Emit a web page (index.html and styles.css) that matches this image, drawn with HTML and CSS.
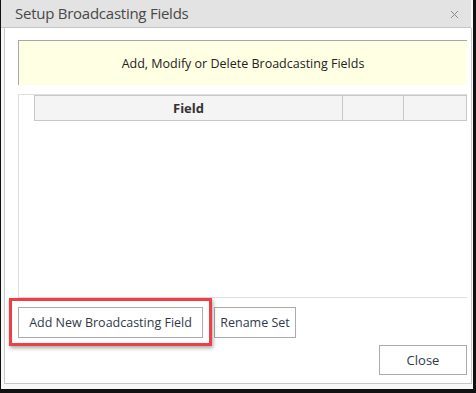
FILE: index.html
```html
<!DOCTYPE html>
<html>
<head>
<meta charset="utf-8">
<link rel="stylesheet" href="styles.css">
</head>
<body>
<div class="window">
  <div class="titlebar">
    <span class="title">Setup Broadcasting Fields</span>
    <svg class="close-x" width="9" height="9" viewBox="0 0 9 9"><path d="M1 1L8 8M8 1L1 8" stroke="#8a8a8a" stroke-width="1" fill="none"/></svg>
  </div>
  <div class="content">
    <div class="banner">Add, Modify or Delete Broadcasting Fields</div>
    <div class="grid">
      <div class="grid-head">
        <div class="col col-field">Field</div>
        <div class="col col-a"></div>
        <div class="col col-b"></div>
      </div>
    </div>
    <div class="actions">
      <div class="highlight-wrap">
        <button class="btn btn-add">Add New Broadcasting Field</button>
        <div class="highlight"></div>
      </div>
      <button class="btn btn-rename">Rename Set</button>
    </div>
    <div class="footer">
      <button class="btn btn-close">Close</button>
    </div>
  </div>
</div>
</body>
</html>
```
FILE: styles.css
```css
html, body {
  margin: 0;
  padding: 0;
}
body {
  background: #111;
  width: 476px;
  height: 393px;
  overflow: hidden;
  font-family: "Open Sans", "Noto Sans", sans-serif;
}
.window {
  margin: 0 3px 0 1px;
  width: 472px;
  height: 389px;
  background: #f8f8f8;
  display: flex;
  flex-direction: column;
}
.titlebar {
  height: 27px;
  flex: none;
  background: #e3e3e3;
  border-bottom: 1px solid #c6c6c6;
  margin-right: 2px;
  display: flex;
  align-items: center;
  justify-content: space-between;
  padding: 0 12px 0 14px;
}
.title {
  font-size: 15px;
  color: #484848;
  letter-spacing: -0.25px;
  margin-top: -1px;
}
.close-x {
  display: block;
  margin-top: 1px;
}
.content {
  flex: 1;
  margin: 0 1px 5px 3px;
  border: 1px solid #c8c8c8;
  border-top: none;
  background: #fff;
  padding: 12px 4px 8px 13px;
  display: flex;
  flex-direction: column;
}
.banner {
  background: #ffffe3;
  border-top: 1px solid #a8a8a8;
  border-left: 1px solid #a8a8a8;
  display: flex;
  align-items: center;
  justify-content: center;
  font-size: 12.5px;
  color: #222;
  padding-top: 1px;
  box-sizing: border-box;
  height: 45px;
}
.grid {
  margin-top: 9px;
  height: 204px;
  box-sizing: border-box;
  border: 1px solid #dedede;
  border-right: none;
  padding-left: 15px;
}
.grid-head {
  display: flex;
  height: 26px;
  box-sizing: border-box;
  border: 1px solid #c8c8c8;
  background: #f4f4f4;
}
.col {
  display: flex;
  align-items: center;
  justify-content: center;
  font-size: 13px;
  font-weight: bold;
  color: #333;
}
.col-field {
  width: 307px;
  border-right: 1px solid #c8c8c8;
}
.col-a {
  width: 60px;
  border-right: 1px solid #c8c8c8;
}
.col-b {
  flex: 1;
}
.actions {
  margin-top: 9px;
  display: flex;
  gap: 11px;
}
.btn {
  font-family: "Open Sans", "Noto Sans", sans-serif;
  font-size: 12.5px;
  color: #2f3a4a;
  background: #fff;
  border: 1px solid #ababab;
  height: 31px;
  padding: 0;
  margin: 0;
  box-sizing: border-box;
}
.highlight-wrap {
  position: relative;
}
.btn-add {
  width: 185px;
  display: block;
}
.highlight {
  position: absolute;
  left: -9px;
  top: -9px;
  right: -9px;
  bottom: -8px;
  border: 3px solid #ec3f46;
  box-shadow: 1px 2px 4px rgba(0,0,0,0.35);
}
.btn-rename {
  width: 82px;
}
.footer {
  margin-top: 7px;
  display: flex;
  justify-content: flex-end;
}
.btn-close {
  width: 88px;
  height: 30px;
  font-size: 13px;
}
```
